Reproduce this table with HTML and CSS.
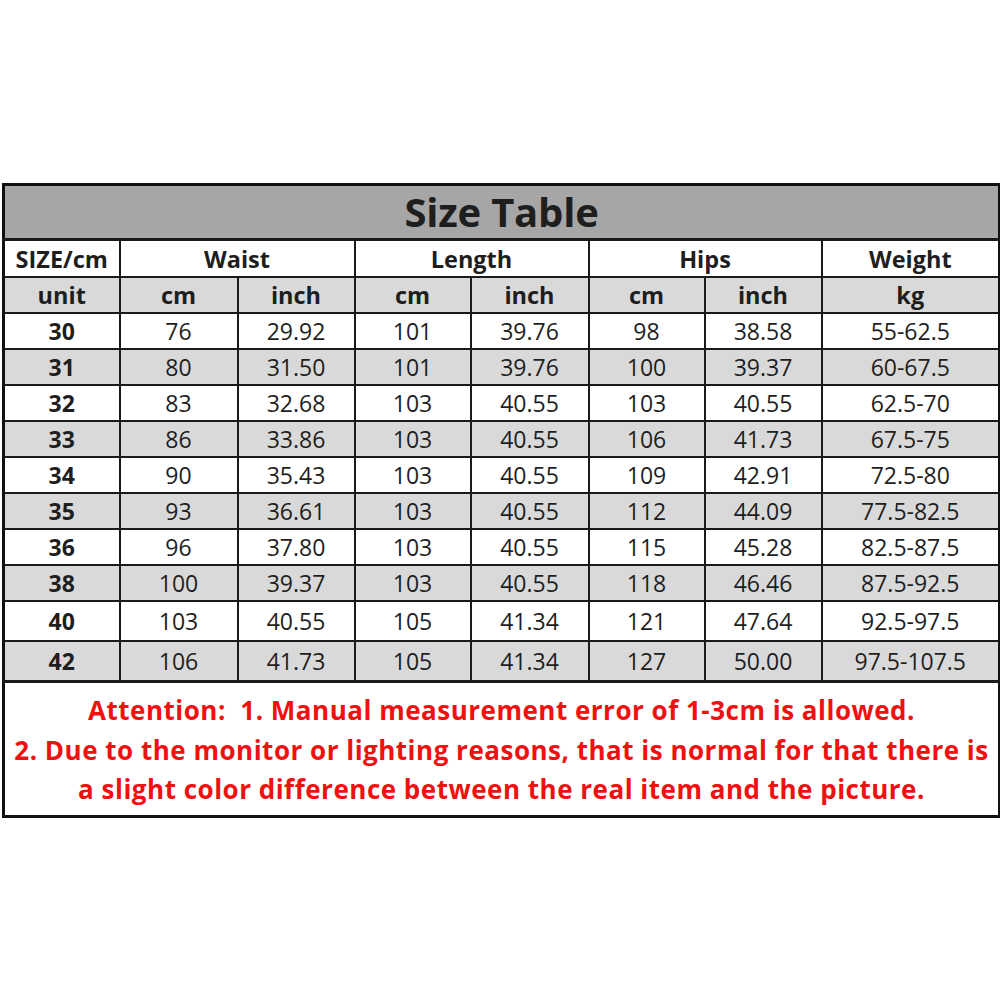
FILE: index.html
```html
<!DOCTYPE html>
<html>
<head>
<meta charset="utf-8">
<link rel="stylesheet" href="styles.css">
</head>
<body>
<div class="page">
<table class="size">
<colgroup>
<col class="c1"><col class="c2"><col class="c3"><col class="c4"><col class="c5"><col class="c6"><col class="c7"><col class="c8">
</colgroup>
<tr class="title"><td colspan="8">Size Table</td></tr>
<tr class="head1"><td>SIZE/cm</td><td colspan="2">Waist</td><td colspan="2">Length</td><td colspan="2">Hips</td><td>Weight</td></tr>
<tr class="head2"><td>unit</td><td>cm</td><td>inch</td><td>cm</td><td>inch</td><td>cm</td><td>inch</td><td>kg</td></tr>
<tr class="row"><th>30</th><td>76</td><td>29.92</td><td>101</td><td>39.76</td><td>98</td><td>38.58</td><td>55-62.5</td></tr>
<tr class="row alt"><th>31</th><td>80</td><td>31.50</td><td>101</td><td>39.76</td><td>100</td><td>39.37</td><td>60-67.5</td></tr>
<tr class="row"><th>32</th><td>83</td><td>32.68</td><td>103</td><td>40.55</td><td>103</td><td>40.55</td><td>62.5-70</td></tr>
<tr class="row alt"><th>33</th><td>86</td><td>33.86</td><td>103</td><td>40.55</td><td>106</td><td>41.73</td><td>67.5-75</td></tr>
<tr class="row"><th>34</th><td>90</td><td>35.43</td><td>103</td><td>40.55</td><td>109</td><td>42.91</td><td>72.5-80</td></tr>
<tr class="row alt"><th>35</th><td>93</td><td>36.61</td><td>103</td><td>40.55</td><td>112</td><td>44.09</td><td>77.5-82.5</td></tr>
<tr class="row"><th>36</th><td>96</td><td>37.80</td><td>103</td><td>40.55</td><td>115</td><td>45.28</td><td>82.5-87.5</td></tr>
<tr class="row alt"><th>38</th><td>100</td><td>39.37</td><td>103</td><td>40.55</td><td>118</td><td>46.46</td><td>87.5-92.5</td></tr>
<tr class="row tall"><th>40</th><td>103</td><td>40.55</td><td>105</td><td>41.34</td><td>121</td><td>47.64</td><td>92.5-97.5</td></tr>
<tr class="row tall alt"><th>42</th><td>106</td><td>41.73</td><td>105</td><td>41.34</td><td>127</td><td>50.00</td><td>97.5-107.5</td></tr>
<tr class="note"><td colspan="8">Attention:&nbsp; 1. Manual measurement error of 1-3cm is allowed.<br>2. Due to the monitor or lighting reasons, that is normal for that there is<br>a slight color difference between the real item and the picture.</td></tr>
</table>
</div>
</body>
</html>
```
FILE: styles.css
```css
html, body {
  margin: 0;
  padding: 0;
  background: #ffffff;
}
.page {
  padding: 183px 2px 0 2px;
}
.size {
  width: 996px;
  border-collapse: collapse;
  table-layout: fixed;
  border: 3px solid #111111;
  font-family: "Open Sans", "Noto Sans", sans-serif;
  color: #1e1e1e;
}
.c1 { width: 116px; }
.c2 { width: 118px; }
.c3 { width: 117px; }
.c4 { width: 116px; }
.c5 { width: 118px; }
.c6 { width: 116px; }
.c7 { width: 117px; }
.c8 { width: 178px; }
.size td, .size th {
  border: 2px solid #1a1a1a;
  text-align: center;
  padding: 0;
  white-space: nowrap;
  overflow: hidden;
}
.title td {
  background: #a6a6a6;
  height: 52px;
  line-height: 52px;
  font-size: 40px;
  font-weight: 700;
  letter-spacing: -0.2px;
  border-bottom-width: 3px;
  padding-bottom: 0;
}
.head1 td {
  background: #ffffff;
  height: 35px;
  line-height: 30px;
  font-size: 23.5px;
  font-weight: 700;
}
.head2 td {
  background: #d9d9d9;
  height: 34px;
  line-height: 30px;
  font-size: 23.5px;
  font-weight: 700;
}
.row td, .row th {
  background: #ffffff;
  height: 34px;
  line-height: 30px;
  font-size: 23px;
  font-weight: 400;
}
.row th {
  font-weight: 700;
}
.row.alt td, .row.alt th {
  background: #d9d9d9;
}
.row.tall td, .row.tall th {
  height: 38px;
}
.note td {
  background: #ffffff;
  color: #f01010;
  font-size: 26px;
  font-weight: 700;
  letter-spacing: 0.5px;
  line-height: 39.5px;
  padding: 8px 0 5px 0;
  border-top-width: 3px;
}
```
